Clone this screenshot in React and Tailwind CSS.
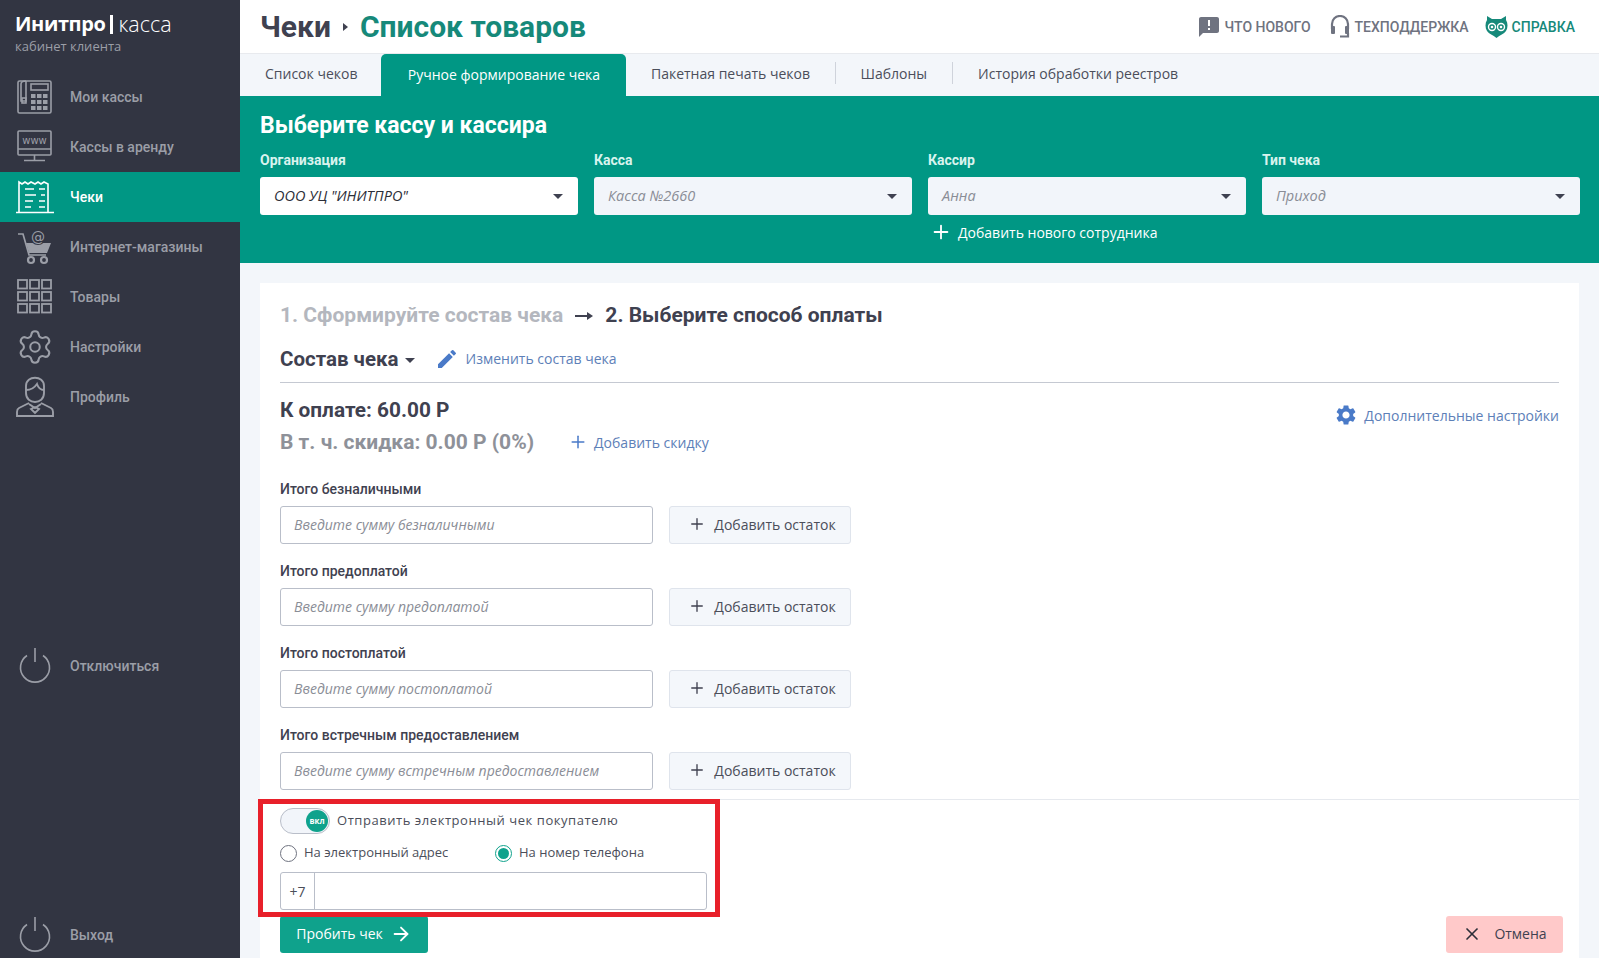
import React from "react";
import { ArrowRight, Plus, Settings, X } from "lucide-react";
import { MdAnnouncement, MdEdit, MdSettings } from "react-icons/md";

const FaxIcon = () => (
  <svg width="36" height="36" viewBox="0 0 36 36" fill="none" stroke="currentColor" strokeWidth="1.6">
    <rect x="1" y="2" width="33" height="32" rx="1.5" />
    <path d="M9 2v20H4V5q0-3 5-3" />
    <rect x="14" y="5" width="17" height="6" />
    <rect x="5" y="19" width="4" height="5" />
    <g fill="currentColor" stroke="none">
      {[14, 20, 26].map((x) =>
        [15, 21, 27].map((y) => <rect key={`${x}-${y}`} x={x} y={y} width="4.5" height="4" />)
      )}
    </g>
  </svg>
);

const WwwIcon = () => (
  <svg width="36" height="36" viewBox="0 0 36 36" fill="none" stroke="currentColor" strokeWidth="1.6">
    <rect x="1" y="2" width="33" height="24" rx="1" />
    <path d="M1 20h33M17.5 26v5M7 31.5h21" />
    <text x="17.5" y="15" textAnchor="middle" fontSize="10" fill="currentColor" stroke="none" fontFamily="'DejaVu Sans', sans-serif">www</text>
  </svg>
);

const ReceiptIcon = () => (
  <svg width="40" height="36" viewBox="0 0 40 36" fill="none" stroke="currentColor" strokeWidth="1.6">
    <path d="M4 33V3l3 2 3-2 3 2 3-2 4 2 3-2 3 2 3-2 4 2v28" />
    <path d="M1 33.5h38" />
    <path d="M10 10h9M24 10h6M10 16h11M26 16h4M10 22h8M24 22h6M10 28h6M24 28h6" />
  </svg>
);

const CartIcon = () => (
  <svg width="36" height="36" viewBox="0 0 36 36" fill="none" stroke="currentColor" strokeWidth="1.7">
    <path d="M1 5h5l6 21h17" />
    <path d="M9 14h25l-4 10H12z" fill="currentColor" stroke="none" />
    <circle cx="21" cy="8" r="8" fill="#323542" stroke="none" />
    <circle cx="14" cy="31" r="3" strokeWidth="2.2" />
    <circle cx="27" cy="31" r="3" strokeWidth="2.2" />
    <text x="21" y="13" textAnchor="middle" fontSize="14" fill="currentColor" stroke="none" fontFamily="'DejaVu Sans', sans-serif">@</text>
  </svg>
);

const GridIcon = () => (
  <svg width="36" height="36" viewBox="0 0 36 36" fill="none" stroke="currentColor" strokeWidth="1.8">
    {[1, 13, 25].map((x) =>
      [1, 13, 25].map((y) => <rect key={`${x}-${y}`} x={x} y={y} width="9" height="8.5" />)
    )}
  </svg>
);

const ProfileIcon = () => (
  <svg width="38" height="42" viewBox="0 0 38 42" fill="none" stroke="currentColor" strokeWidth="1.9">
    <path d="M10 10C10-1 28-1 28 10v7c0 12-18 12-18 0z" />
    <path d="M10 14c6 0 9-3 11-6 1 3 3 6 7 6" />
    <path d="M13 27L3 32q-2 1-2 4v4h36v-4q0-3-2-4l-10-5" />
    <path d="M13 28l6 4 6-4M15 33l4-2 4 2-4 4z" />
  </svg>
);

const PowerIcon = () => (
  <svg width="36" height="36" viewBox="0 0 36 36" fill="none" stroke="currentColor" strokeWidth="1.6">
    <path d="M18 0v14" />
    <path d="M10 7.5a14.5 14.5 0 1 0 16 0" />
  </svg>
);

const OwlIcon = () => (
  <svg width="23" height="23" viewBox="0 0 23 23">
    <path d="M2 1l5 3h9l5-3v4c2 3 2 8 0 11-2 3-6 4-9.5 7C8 20 4 19 2 16 0 13 0 8 2 5z" fill="#16897a" />
    <circle cx="7" cy="12" r="4.2" fill="#fff" />
    <circle cx="16" cy="12" r="4.2" fill="#fff" />
    <circle cx="7" cy="12" r="2.8" fill="#16897a" />
    <circle cx="16" cy="12" r="2.8" fill="#16897a" />
    <circle cx="7" cy="12" r="1.3" fill="#fff" />
    <circle cx="16" cy="12" r="1.3" fill="#fff" />
  </svg>
);

const HeadsetIcon = () => (
  <svg width="20" height="23" viewBox="0 0 20 23" fill="none" stroke="#6f7380" strokeWidth="2.2">
    <path d="M2 14V9a8 8 0 0 1 16 0v5" />
    <rect x="1" y="11" width="4" height="8" rx="1" fill="#6f7380" stroke="none" />
    <rect x="15" y="11" width="4" height="8" rx="1" fill="#6f7380" stroke="none" />
    <path d="M18 18v3.5h-8" />
  </svg>
);

const StepArrow = () => (
  <svg width="18" height="10" viewBox="0 0 18 10" className="mx-[12px] text-[#3f4150]" fill="currentColor">
    <path d="M0 4h12V1l6 4-6 4V6H0z" />
  </svg>
);

const Caret = () => (
  <span className="block w-0 h-0 border-x-[5px] border-x-transparent border-t-[5px] border-t-[#3f4150]" />
);

const navItems = [
  { label: "Мои кассы", icon: <FaxIcon /> },
  { label: "Кассы в аренду", icon: <WwwIcon /> },
  { label: "Чеки", icon: <ReceiptIcon />, active: true },
  { label: "Интернет-магазины", icon: <CartIcon /> },
  { label: "Товары", icon: <GridIcon /> },
  { label: "Настройки", icon: <Settings size={38} strokeWidth={1.3} /> },
  { label: "Профиль", icon: <ProfileIcon /> },
];

const NavItem = ({ label, icon, active, className = "" }) => (
  <div
    className={`flex items-center h-[50px] shrink-0 text-[14px] font-medium ${
      active ? "bg-[#009784] text-white" : "text-[#9b9ea7]"
    } ${className}`}
  >
    <div className="w-[70px] flex justify-center">{icon}</div>
    <span>{label}</span>
  </div>
);

const Select = ({ label, value, disabled }) => (
  <div>
    <div className="text-[14px] leading-[18px] font-bold text-[#d9f3ee] font-['Roboto',sans-serif]">{label}</div>
    <div
      className={`mt-[8px] h-[38px] rounded-[3px] flex items-center justify-between pl-[14px] pr-[15px] ${
        disabled ? "bg-[#f2f5fa] text-[#8a8d96]" : "bg-white text-[#2c2e38]"
      }`}
    >
      <span className="italic text-[14.5px]">{value}</span>
      <Caret />
    </div>
  </div>
);

const Field = ({ label, placeholder }) => (
  <div className="mb-[18px]">
    <div className="text-[14px] leading-[18px] font-medium text-[#3f4150] font-['Roboto',sans-serif]">{label}</div>
    <div className="mt-[8px] flex gap-[16px]">
      <div className="w-[373px] h-[38px] pb-[2px] rounded-[3px] border border-[#b9bec9] flex items-center px-[13px] italic text-[14px] text-[#8a8d96]">
        {placeholder}
      </div>
      <div className="w-[182px] h-[38px] pb-[2px] pl-[4px] rounded-[3px] border border-[#dfe4ec] bg-[#f4f7fb] flex items-center justify-center gap-[8px] text-[14px] text-[#4b4e5a]">
        <Plus size={18} strokeWidth={1.8} className="text-[#3f4150]" />
        Добавить остаток
      </div>
    </div>
  </div>
);

const tabs = [
  { label: "Список чеков", className: "pl-[25px] pr-[24px]" },
  { label: "Ручное формирование чека", active: true },
  { label: "Пакетная печать чеков", className: "px-[24.5px]", divider: true },
  { label: "Шаблоны", className: "px-[25px]", divider: true },
  { label: "История обработки реестров", className: "px-[25px]" },
];

const App = () => {
  return (
    <div className="flex h-[958px] w-[1599px] overflow-hidden bg-[#f3f6fa] font-['Open_Sans',sans-serif]">
      {/* Sidebar */}
      <aside className="w-[240px] shrink-0 flex flex-col bg-[#323542] font-['Roboto',sans-serif]">
        <div className="h-[72px] shrink-0 pl-[15px] pt-[11px]">
          <div className="text-[20px] leading-[26px] text-white font-['Open_Sans',sans-serif] flex items-center">
            <span className="font-bold tracking-[-0.4px]">Инитпро</span>
            <span className="w-[3px] h-[19px] mx-[5px] bg-white" />
            <span className="font-light text-[21.5px]">касса</span>
          </div>
          <div className="text-[13px] leading-[18px] text-[#9b9ea7] font-['Open_Sans',sans-serif]">кабинет клиента</div>
        </div>
        {navItems.map((item) => (
          <NavItem key={item.label} {...item} />
        ))}
        <NavItem label="Отключиться" icon={<PowerIcon />} className="mt-[219px]" />
        <NavItem label="Выход" icon={<PowerIcon />} className="mt-[219px]" />
      </aside>

      <main className="relative flex-1 flex flex-col min-w-0">
        {/* Header */}
        <header className="h-[54px] shrink-0 bg-white flex items-center justify-between pl-[20px] pr-[24px] border-b border-[#e8eaee]">
          <div className="flex items-center font-['Roboto',sans-serif] font-bold text-[30px]">
            <span className="text-[#3f4150]">Чеки</span>
            <span className="mx-[12px] w-0 h-0 border-y-[4px] border-y-transparent border-l-[5px] border-l-[#3f4150]" />
            <span className="text-[#16897a]">Список товаров</span>
          </div>
          <div className="flex items-center text-[14px] font-['Roboto',sans-serif] font-medium">
            <MdAnnouncement size={24} className="text-[#6f7380] mr-[4px]" />
            <span className="text-[#6f7380] pt-px">ЧТО НОВОГО</span>
            <span className="ml-[19px] mr-[5px]"><HeadsetIcon /></span>
            <span className="text-[#6f7380] pt-px">ТЕХПОДДЕРЖКА</span>
            <span className="ml-[16px] mr-[4px]"><OwlIcon /></span>
            <span className="text-[#16897a] pt-px">СПРАВКА</span>
          </div>
        </header>

        {/* Tabs */}
        <nav className="h-[42px] shrink-0 flex items-stretch text-[14px] text-[#4b4e5a]">
          {tabs.map((tab) =>
            tab.active ? (
              <div key={tab.label} className="w-[245px] pb-[2px] flex items-center justify-center rounded-t-[5px] bg-[#009784] text-white">
                {tab.label}
              </div>
            ) : (
              <div key={tab.label} className="flex items-center pb-[4px]">
                <span className={tab.className}>{tab.label}</span>
                {tab.divider && <span className="w-px h-[22px] bg-[#cfd3db]" />}
              </div>
            )
          )}
        </nav>

        {/* Cash register selection */}
        <section className="h-[167px] shrink-0 bg-[#009784] pl-[20px] pr-[19px] pt-[16px]">
          <h2 className="text-[23px] leading-[28px] font-bold text-white font-['Roboto',sans-serif]">Выберите кассу и кассира</h2>
          <div className="mt-[11px] grid grid-cols-4 gap-x-[16px]">
            <Select label="Организация" value={'ООО УЦ "ИНИТПРО"'} />
            <Select label="Касса" value="Касса №2660" disabled />
            <Select label="Кассир" value="Анна" disabled />
            <Select label="Тип чека" value="Приход" disabled />
          </div>
          <div className="mt-[6px] ml-[670px] flex items-center gap-[6px] text-[14px] text-white">
            <Plus size={22} strokeWidth={2} />
            Добавить нового сотрудника
          </div>
        </section>

        {/* Receipt form */}
        <section className="mx-[20px] mt-[20px] flex-1 bg-white overflow-hidden">
          <div className="px-[20px] pt-[20px]">
            <div className="h-[24px] pt-[2px] flex items-center text-[21px] font-bold font-['Roboto',sans-serif]">
              <span className="text-[#b4b7be]">1. Сформируйте состав чека</span>
              <StepArrow />
              <span className="text-[#3f4150]">2. Выберите способ оплаты</span>
            </div>
            <div className="mt-[20px] h-[24px] flex items-center">
              <span className="text-[20.5px] font-bold text-[#3f4150] font-['Roboto',sans-serif]">Состав чека</span>
              <span className="ml-[6px] pt-[2px]"><Caret /></span>
              <MdEdit size={24} className="ml-[20px] text-[#4a7ac8]" />
              <span className="ml-[7px] pb-[2px] text-[14px] text-[#5d80b8]">Изменить состав чека</span>
            </div>
            <div className="mt-[11px] h-px bg-[#c5c9d2]" />
            <div className="mt-[15px] flex justify-between">
              <div>
                <div className="h-[24px] pt-[2px] flex items-center text-[20.8px] font-bold text-[#3f4150] font-['Roboto',sans-serif]">К оплате: 60.00 Р</div>
                <div className="mt-[8px] h-[24px] flex items-center">
                  <span className="pt-[2px] text-[21px] font-bold text-[#8e9199] font-['Roboto',sans-serif]">В т. ч. скидка: 0.00 Р (0%)</span>
                  <Plus size={20} strokeWidth={1.8} className="ml-[34px] text-[#4a7ac8]" />
                  <span className="ml-[6px] text-[14px] text-[#5d80b8]">Добавить скидку</span>
                </div>
              </div>
              <div className="pt-[4px] h-[30px] flex items-center gap-[6px] text-[14px] text-[#5d80b8]">
                <MdSettings size={24} className="text-[#4a7ac8]" />
                Дополнительные настройки
              </div>
            </div>
            <div className="mt-[26px]">
              <Field label="Итого безналичными" placeholder="Введите сумму безналичными" />
              <Field label="Итого предоплатой" placeholder="Введите сумму предоплатой" />
              <Field label="Итого постоплатой" placeholder="Введите сумму постоплатой" />
              <Field label="Итого встречным предоставлением" placeholder="Введите сумму встречным предоставлением" />
            </div>
          </div>
          <div className="-mt-[9px] h-px bg-[#e6e9ee]" />
          <div className="px-[20px]">
            <div className="mt-[8px] h-[26px] flex items-center">
              <div className="relative w-[50px] h-[26px] rounded-full border border-[#b9bec9] bg-[#f2f5fa]">
                <span className="absolute right-[1px] top-[1px] w-[22px] h-[22px] rounded-full bg-[#0fa28c] text-white text-[8px] font-bold flex items-center justify-center">вкл</span>
              </div>
              <span className="ml-[7px] text-[13px] text-[#4b4e5a] tracking-[0.55px]">Отправить электронный чек покупателю</span>
            </div>
            <div className="mt-[9px] h-[20px] flex items-center text-[13px] text-[#4b4e5a]">
              <span className="w-[17px] h-[17px] rounded-full border border-[#6f7380] bg-white" />
              <span className="ml-[7px] w-[191px]">На электронный адрес</span>
              <span className="w-[17px] h-[17px] rounded-full border border-[#0fa28c] bg-white flex items-center justify-center">
                <span className="w-[11px] h-[11px] rounded-full bg-[#0fa28c]" />
              </span>
              <span className="ml-[7px]">На номер телефона</span>
            </div>
            <div className="mt-[9px] w-[427px] h-[38px] rounded-[3px] border border-[#b9bec9] flex">
              <span className="w-[34px] border-r border-[#b9bec9] flex items-center justify-center text-[14px] text-[#4b4e5a]">+7</span>
            </div>
            <div className="mt-[6px] -mr-[4px] flex justify-between">
              <div className="w-[148px] h-[37px] pb-[2px] rounded-[3px] bg-[#0fa28c] flex items-center justify-center gap-[7px] text-[14px] text-white">
                Пробить чек
                <ArrowRight size={22} strokeWidth={2} />
              </div>
              <div className="w-[117px] h-[37px] pb-[2px] rounded-[3px] bg-[#ffc9c9] flex items-center justify-center gap-[12px] text-[14px] text-[#3f4150]">
                <X size={20} strokeWidth={2} className="text-[#2c2e38]" />
                Отмена
              </div>
            </div>
          </div>
        </section>

        {/* Annotation frame */}
        <div className="absolute left-[18px] top-[799px] w-[462px] h-[118px] border-[5px] border-[#e8202a] pointer-events-none" />
      </main>
    </div>
  );
};

export default App;
